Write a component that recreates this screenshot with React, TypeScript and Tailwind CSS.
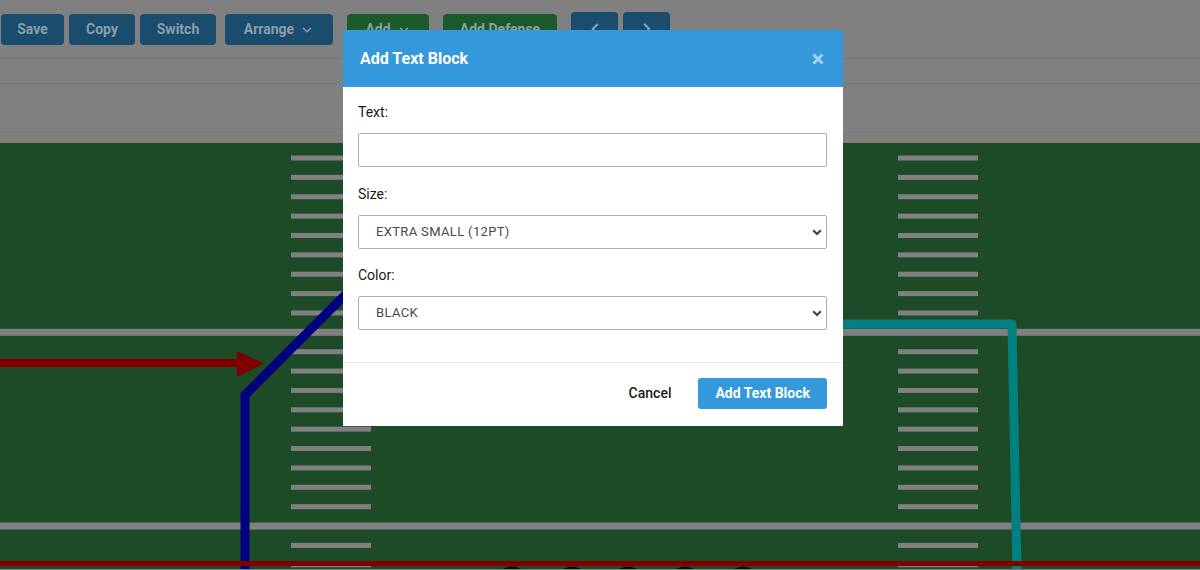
import { ChevronDown, ChevronLeft, ChevronRight } from "lucide-react";

const FONT = "font-['Roboto','Liberation_Sans',sans-serif]";

// y of every 5-yard tick, page coordinates
const TICKS = Array.from({ length: 22 }, (_, k) => 159 + k * 19.37);

function ToolButton({ label, green, chevron, w }: { label: string; green?: boolean; chevron?: boolean; w: string }) {
  return (
    <div
      className={`flex h-[31px] ${w} items-center justify-center gap-[6px] rounded-[4px] text-[14px] font-bold text-[#8c9ea9] ${
        green ? "bg-[#1a5a2a]" : "bg-[#1a4c6e]"
      }`}
    >
      <span>{label}</span>
      {chevron && <ChevronDown className="h-[14px] w-[14px]" strokeWidth={2.5} />}
    </div>
  );
}

function Field() {
  return (
    <svg className="block" width={1200} height={426} viewBox="0 144 1200 426">
      <rect x={0} y={144} width={1200} height={426} fill="#1e4b27" />
      {TICKS.map((y, k) =>
        k === 9 || k === 19 ? (
          <rect key={k} x={0} y={y - 3.5} width={1200} height={7} fill="#808080" />
        ) : (
          <g key={k} fill="#808080">
            <rect x={291} y={y - 2.5} width={80} height={5} />
            <rect x={898} y={y - 2.5} width={80} height={5} />
          </g>
        )
      )}
      {/* routes */}
      <line x1={0} y1={364} x2={240} y2={364} stroke="#800000" strokeWidth={8} />
      <polygon points="237,352 264,364.5 237,378" fill="#800000" />
      <polyline points="245,575 245,396 400,241" fill="none" stroke="#000080" strokeWidth={9} strokeLinejoin="miter" />
      <polyline points="700,325 1012,325 1017,575" fill="none" stroke="#008080" strokeWidth={9} strokeLinejoin="round" />
      <rect x={0} y={562} width={1200} height={5} fill="#800000" />
      {[512, 572, 628, 685, 743].map((cx) => (
        <circle key={cx} cx={cx} cy={584} r={15} fill="none" stroke="#0a0a0a" strokeWidth={3} />
      ))}
    </svg>
  );
}

function SelectBox({ value }: { value: string }) {
  return (
    <div className="relative">
      <select
        defaultValue={value}
        className="block h-[34px] w-full appearance-none rounded-[2px] border border-[#a9b0b8] bg-white pl-[17px] text-[13px] tracking-[0.35px] text-[#4a4a4a] outline-none"
      >
        <option>{value}</option>
      </select>
      <svg
        className="pointer-events-none absolute right-[5px] top-[14px]"
        width={10}
        height={7}
        viewBox="0 0 10 7"
      >
        <path d="M1.2 1.2 L5 5 L8.8 1.2" fill="none" stroke="#444" strokeWidth={2.2} />
      </svg>
    </div>
  );
}

function Modal() {
  return (
    <div className="absolute left-[343px] top-[30px] w-[500px] bg-white">
      <div className="flex h-[57px] items-center justify-between bg-[#3498db] pl-[17px] pr-[19px]">
        <h2 className="text-[16px] font-bold text-white">Add Text Block</h2>
        <svg width={12} height={12} viewBox="0 0 12 12">
          <path d="M1.5 1.5 L10.5 10.5 M10.5 1.5 L1.5 10.5" stroke="#a8d0f0" strokeWidth={3} />
        </svg>
      </div>
      <div className="pb-[32px] pl-[15px] pr-[16px] pt-[15px] text-[14px] leading-[20px] text-[#1a1a1a]">
        <label className="block">Text:</label>
        <input className="mt-[11px] block h-[34px] w-full rounded-[2px] border border-[#a9b0b8] outline-none" />
        <label className="mt-[17px] block">Size:</label>
        <div className="mt-[11px]">
          <SelectBox value="EXTRA SMALL (12PT)" />
        </div>
        <label className="mt-[16px] block">Color:</label>
        <div className="mt-[11px]">
          <SelectBox value="BLACK" />
        </div>
      </div>
      <div className="flex items-center justify-end border-t border-[#e6e6e6] pb-[17px] pr-[16px] pt-[15px]">
        <span className="mr-[27px] text-[14px] font-medium text-[#1a1a1a]">Cancel</span>
        <button className="h-[31px] rounded-[3px] bg-[#3498db] px-[17px] text-[14px] font-bold text-white">
          Add Text Block
        </button>
      </div>
    </div>
  );
}

export default function App() {
  return (
    <div className={`relative h-[570px] w-[1200px] overflow-hidden bg-[#808080] ${FONT}`}>
      {/* toolbar */}
      <div className="flex h-[59px] items-start border-b border-[#7a7a7a] pl-[1px]">
        <div className="mt-[12px] flex h-[33px] items-end">
          <ToolButton label="Save" w="w-[63px]" />
          <div className="ml-[5px]"><ToolButton label="Copy" w="w-[66px]" /></div>
          <div className="ml-[5px]"><ToolButton label="Switch" w="w-[76px]" /></div>
          <div className="ml-[9px]"><ToolButton label="Arrange" chevron w="w-[108px]" /></div>
          <div className="ml-[14px]"><ToolButton label="Add" green chevron w="w-[82px]" /></div>
          <div className="ml-[14px]"><ToolButton label="Add Defense" green w="w-[114px]" /></div>
          <div className="ml-[14px] flex h-[33px] w-[47px] items-center justify-center rounded-[4px] bg-[#1a4c6e] text-[#8c9ea9]">
            <ChevronLeft className="h-[18px] w-[18px]" strokeWidth={3} />
          </div>
          <div className="ml-[5px] flex h-[33px] w-[47px] items-center justify-center rounded-[4px] bg-[#1a4c6e] text-[#8c9ea9]">
            <ChevronRight className="h-[18px] w-[18px]" strokeWidth={3} />
          </div>
        </div>
      </div>
      <div className="h-[25px] border-b border-[#7a7a7a]" />
      <div className="h-[52px] border-b border-[#7a7a7a]" />
      <div className="h-[7px]" />
      <Field />
      <Modal />
    </div>
  );
}
